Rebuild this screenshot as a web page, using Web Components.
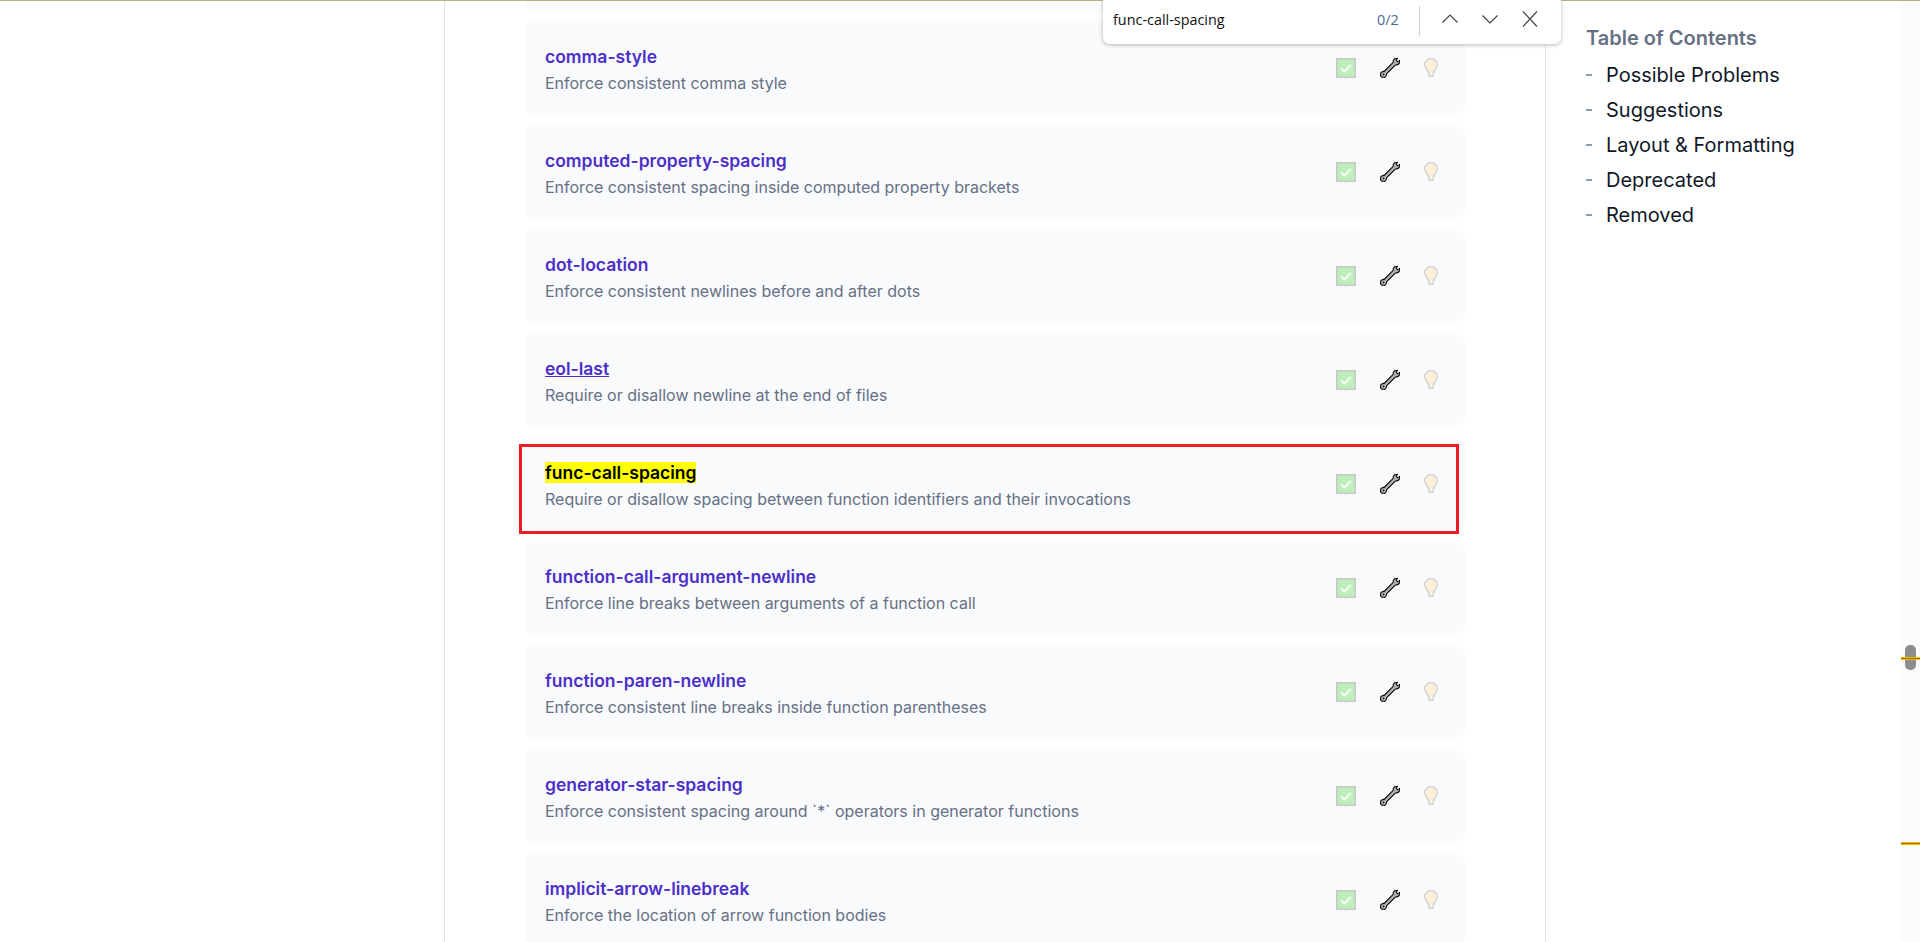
<!DOCTYPE html>
<html lang="en">
<head>
<meta charset="utf-8">
<title>Rules Reference</title>
<style>
    html, body { margin: 0; height: 100%; overflow: hidden; background: #fff; }
    body { font-family: Inter, "Liberation Sans", sans-serif; }
    mark { background: #ff0; color: #000; }
    a { color: inherit; text-decoration: none; }
    a.hovered { text-decoration: underline; }
</style>
</head>
<body>
<docs-page>
    <rule-card partial slot="rules"></rule-card>
    <rule-card slot="rules"><a slot="name">comma-style</a>Enforce consistent comma style</rule-card>
    <rule-card slot="rules"><a slot="name">computed-property-spacing</a>Enforce consistent spacing inside computed property brackets</rule-card>
    <rule-card slot="rules"><a slot="name">dot-location</a>Enforce consistent newlines before and after dots</rule-card>
    <rule-card slot="rules"><a slot="name" class="hovered">eol-last</a>Require or disallow newline at the end of files</rule-card>
    <rule-card slot="rules" boxed><a slot="name"><mark>func-call-spacing</mark></a>Require or disallow spacing between function identifiers and their invocations</rule-card>
    <rule-card slot="rules"><a slot="name">function-call-argument-newline</a>Enforce line breaks between arguments of a function call</rule-card>
    <rule-card slot="rules"><a slot="name">function-paren-newline</a>Enforce consistent line breaks inside function parentheses</rule-card>
    <rule-card slot="rules"><a slot="name">generator-star-spacing</a>Enforce consistent spacing around `*` operators in generator functions</rule-card>
    <rule-card slot="rules"><a slot="name">implicit-arrow-linebreak</a>Enforce the location of arrow function bodies</rule-card>
</docs-page>

<script>
class RuleIcons extends HTMLElement {
    constructor() {
        super();
        this.attachShadow({ mode: 'open' });
        this.shadowRoot.innerHTML =
            `<style>
                :host { display: flex; align-items: center; gap: 24px; }
                svg { display: block; width: 20px; height: 20px; }
            </style>
            <svg viewBox="0 0 20 20">
                <rect x=".75" y=".75" width="18.5" height="18.5" fill="#bfeebb" stroke="#c8cac8" stroke-width="1.5"/>
                <path d="M5.2 10.4l3.3 3.2 6.2-6.8" fill="none" stroke="#fff" stroke-width="1.8"/>
            </svg>
            <svg viewBox="0 0 20 20">
                <g transform="translate(10 10) rotate(45)">
                    <path d="M-1.700-5.800C-1.700-6.400-3.300-7-3.300-9.300-3.300-10.700-2.600-11.700-1.500-12.300L-1.200-9.800H1.200L1.500-12.300C2.600-11.700 3.300-10.700 3.300-9.300 3.300-7 1.700-6.400 1.700-5.800V6.300C1.700 6.700 3 7.200 3 9.300A3 3 0 0 1-3 9.300C-3 7.200-1.700 6.700-1.700 6.300Z" fill="#b0b0b0" stroke="#0c0c0c" stroke-width="1.100" stroke-linejoin="round"/>
                    <circle cy="9.300" r="1" fill="#2a2a2a"/>
                </g>
            </svg>
            <svg viewBox="0 0 14 20" style="width:14px">
                <path d="M7 .7C3.300.7.700 3.400.700 6.700c0 3.200 2.500 4.600 2.900 7.300h6.800c.4-2.700 2.900-4.100 2.900-7.300C13.300 3.400 10.700.7 7 .7z" fill="#fdf0d6" stroke="#d0d0d0" stroke-width="1.300"/>
                <path d="M4 14v3.800c0 .8.700 1.400 1.400 1.400h3.200c.7 0 1.400-.6 1.400-1.400V14z" fill="#d6d6d6"/>
                <path d="M5.500 13.500v3.900h3v-3.900z" fill="#fdf6e6"/>
            </svg>`;
    }
}
customElements.define('rule-icons', RuleIcons);

class RuleCard extends HTMLElement {
    constructor() {
        super();
        this.attachShadow({ mode: 'open' });
        this.shadowRoot.innerHTML =
            `<style>
                :host {
                    display: flex;
                    position: relative;
                    box-sizing: border-box;
                    width: 940px;
                    height: 94px;
                    align-items: center;
                    justify-content: space-between;
                    padding: 0 27px 0 20px;
                    background: #f9fafb;
                    border-radius: 12px;
                }
                :host([partial]) { height: 11px; border-radius: 0 0 12px 12px; }
                .text { display: flex; flex-direction: column; gap: 2px; padding-top: 4px; }
                .name { font-size: 17.500px; line-height: 24px; font-weight: 600; color: #4b2fc9; }
                .desc { font-size: 16px; line-height: 24px; color: #667085; }
                .box {
                    display: none;
                    position: absolute;
                    left: -6px;
                    top: 7px;
                    box-sizing: border-box;
                    width: 940px;
                    height: 90px;
                    border: 3px solid #ed1c24;
                }
                :host([boxed]) .box { display: block; }
            </style>
            <div class="text">
                <div class="name"><slot name="name"></slot></div>
                <div class="desc"><slot></slot></div>
            </div>
            <rule-icons></rule-icons>
            <div class="box"></div>`;
        if (this.hasAttribute('partial')) {
            this.shadowRoot.querySelector('.text').remove();
            this.shadowRoot.querySelector('rule-icons').remove();
        }
    }
}
customElements.define('rule-card', RuleCard);

class TocNav extends HTMLElement {
    constructor() {
        super();
        this.attachShadow({ mode: 'open' });
        const items = ['Possible Problems', 'Suggestions', 'Layout & Formatting', 'Deprecated', 'Removed'];
        this.shadowRoot.innerHTML =
            `<style>
                :host { display: block; padding: 24px 0 0 40px; }
                h2 { margin: 0 0 5px; font-size: 20px; line-height: 28px; font-weight: 600; color: #667085; }
                ul { margin: 0; padding: 0; list-style: none; }
                li { display: flex; height: 35px; align-items: center; font-size: 20px; color: #101828; }
                li::before { content: ""; width: 6px; height: 2px; margin-right: 14px; background: #8e9bb0; }
            </style>
            <h2>Table of Contents</h2>
            <ul>${items.map(i => `<li>${i.replace('&', '&amp;')}</li>`).join('')}</ul>`;
    }
}
customElements.define('toc-nav', TocNav);

class FindBar extends HTMLElement {
    constructor() {
        super();
        this.attachShadow({ mode: 'open' });
        this.shadowRoot.innerHTML =
            `<style>
                :host {
                    display: flex;
                    position: absolute;
                    left: 1103px;
                    top: 0;
                    box-sizing: border-box;
                    width: 458px;
                    height: 44px;
                    align-items: center;
                    padding: 0 0 6px 10px;
                    background: #fff;
                    border-radius: 0 0 7px 7px;
                    box-shadow: 0 1px 4px rgba(0, 0, 0, .28);
                    font-family: "Open Sans", "Noto Sans", sans-serif;
                    font-size: 14.400px;
                }
                .query { flex: 1; color: #111; }
                .count { width: 22px; margin-right: 20px; color: #4c6a92; white-space: nowrap; }
                .sep { width: 1px; height: 30px; background: #cfcfcf; margin-top: 4px; }
                svg { display: block; width: 16px; height: 16px; margin-left: 24px; fill: none; stroke: #444; stroke-width: 1.200; }
                svg:first-of-type { margin-left: 22px; }
                svg:last-of-type { margin-right: 23px; }
            </style>
            <span class="query">func-call-spacing</span>
            <span class="count">0/2</span>
            <span class="sep"></span>
            <svg viewBox="0 0 16 16"><path d="M.5 11.500L8 4l7.500 7.500"/></svg>
            <svg viewBox="0 0 16 16"><path d="M.5 4.500L8 12l7.500-7.500"/></svg>
            <svg viewBox="0 0 16 16"><path d="M1 .5l14 15M15 .5L1 15.500"/></svg>`;
    }
}
customElements.define('find-bar', FindBar);

class PageScrollbar extends HTMLElement {
    constructor() {
        super();
        this.attachShadow({ mode: 'open' });
        this.shadowRoot.innerHTML =
            `<style>
                :host { display: block; position: relative; background: #fbfbfb; }
                .thumb { position: absolute; left: 4px; top: 645px; width: 11px; height: 25px; background: #8d8d8d; border-radius: 5px; }
                .hit { position: absolute; left: 0; width: 19px; height: 3px; background: #a86a00; border-top: 1px solid #f0c000; border-bottom: 1px solid #f0c000; box-sizing: border-box; }
            </style>
            <div class="thumb"></div>
            <div class="hit" style="top:657px"></div>
            <div class="hit" style="top:842px"></div>`;
    }
}
customElements.define('page-scrollbar', PageScrollbar);

class DocsPage extends HTMLElement {
    constructor() {
        super();
        this.attachShadow({ mode: 'open' });
        this.shadowRoot.innerHTML =
            `<style>
                :host {
                    display: grid;
                    position: relative;
                    grid-template-columns: 444px 1102px 1fr 19px;
                    height: 942px;
                    overflow: hidden;
                }
                .topline { position: absolute; left: 0; right: 0; top: 0; height: 1px; background: #b9ae86; z-index: 2; }
                main {
                    display: flex;
                    flex-direction: column;
                    gap: 10px;
                    padding-left: 80px;
                    border-left: 1px solid #e4e5ec;
                    border-right: 1px solid #e4e5ec;
                    box-sizing: border-box;
                }
                find-bar { z-index: 3; }
            </style>
            <div class="topline"></div>
            <div></div>
            <main><slot name="rules"></slot></main>
            <toc-nav></toc-nav>
            <page-scrollbar></page-scrollbar>
            <find-bar></find-bar>`;
    }
}
customElements.define('docs-page', DocsPage);
</script>
</body>
</html>
